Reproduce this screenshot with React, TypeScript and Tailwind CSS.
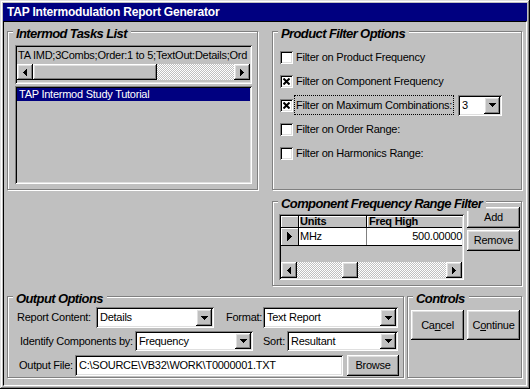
import type { ReactNode } from "react";

// classic 3D edges
const raised =
  "shadow-[inset_-1px_-1px_#000,inset_1px_1px_#fff,inset_-2px_-2px_#808080,inset_2px_2px_#dfdfdf]";
const sunken =
  "shadow-[inset_1px_1px_#808080,inset_-1px_-1px_#fff,inset_2px_2px_#000,inset_-2px_-2px_#dfdfdf]";
const checker =
  "bg-[image:repeating-conic-gradient(#fff_0%_25%,#c0c0c0_0%_50%)] bg-[length:2px_2px]";

function Arrow({ dir }: { dir: "down" | "left" | "right" }) {
  if (dir === "down")
    return (
      <svg width="7" height="4" shapeRendering="crispEdges">
        <polygon points="0,0 7,0 3.5,4" fill="#000" />
      </svg>
    );
  if (dir === "left")
    return (
      <svg width="4" height="7" shapeRendering="crispEdges">
        <polygon points="4,0 4,7 0,3.5" fill="#000" />
      </svg>
    );
  return (
    <svg width="4" height="7" shapeRendering="crispEdges">
      <polygon points="0,0 0,7 4,3.5" fill="#000" />
    </svg>
  );
}

function Group({
  label,
  className,
  children,
}: {
  label: string;
  className?: string;
  children?: ReactNode;
}) {
  return (
    <div
      className={`relative border border-[#808080] shadow-[inset_1px_1px_#fff,1px_1px_#fff] ${className ?? ""}`}
    >
      <span className="absolute left-[5px] -top-[6px] bg-[#c0c0c0] pl-[3px] pr-[4px] text-[13px] leading-[15px] font-bold italic tracking-[-0.6px] whitespace-nowrap">
        {label}
      </span>
      {children}
    </div>
  );
}

function Button({ children, className }: { children: ReactNode; className?: string }) {
  return (
    <div
      className={`flex items-center justify-center bg-[#c0c0c0] ${raised} ${className ?? ""}`}
    >
      {children}
    </div>
  );
}

function Combo({ value, className }: { value: string; className?: string }) {
  return (
    <div className={`flex items-stretch bg-white p-[2px] ${sunken} ${className ?? ""}`}>
      <span className="flex-1 flex items-center pl-[2px] whitespace-nowrap overflow-hidden">
        {value}
      </span>
      <span className={`w-[16px] flex items-center justify-center bg-[#c0c0c0] ${raised}`}>
        <Arrow dir="down" />
      </span>
    </div>
  );
}

function Check({ checked }: { checked?: boolean }) {
  return (
    <span
      className={`w-[13px] h-[13px] shrink-0 flex items-center justify-center bg-white ${sunken}`}
    >
      {checked && (
        <svg width="7" height="7">
          <path d="M0.5 0.5 L6.5 6.5 M6.5 0.5 L0.5 6.5" stroke="#000" strokeWidth="2" />
        </svg>
      )}
    </span>
  );
}

function HScroll({ before, thumb }: { before: number; thumb: number }) {
  return (
    <div className="flex h-[16px]">
      <Button className="w-[16px] h-[16px] shrink-0">
        <Arrow dir="left" />
      </Button>
      <div className={`flex-1 flex ${checker}`}>
        <div style={{ width: before }} />
        <div className={`h-full bg-[#c0c0c0] ${raised}`} style={{ width: thumb }} />
      </div>
      <Button className="w-[16px] h-[16px] shrink-0">
        <Arrow dir="right" />
      </Button>
    </div>
  );
}

const filters = [
  { label: "Filter on Product Frequency", checked: false },
  { label: "Filter on Component Frequency", checked: true },
  { label: "Filter on Maximum Combinations:", checked: true, focus: true },
  { label: "Filter on Order Range:", checked: false },
  { label: "Filter on Harmonics Range:", checked: false },
];

export default function App() {
  return (
    <div
      className={`w-[530px] h-[389px] p-[3px] flex flex-col bg-[#c0c0c0] text-black font-['Liberation_Sans',Arial,sans-serif] text-[11px] tracking-[-0.25px] shadow-[inset_-1px_-1px_#000,inset_1px_1px_#dfdfdf,inset_-2px_-2px_#808080,inset_2px_2px_#fff]`}
    >
      <div className="h-[18px] shrink-0 bg-[#000080] text-white font-bold text-[12px] leading-[18px] tracking-[-0.2px] pl-[4px]">
        TAP Intermodulation Report Generator
      </div>

      <div className="flex-1 flex flex-col border border-l-black border-t-black border-r-white border-b-white pl-[3px] pt-[9px]">
        <div className="flex items-start">
          {/* left: task list */}
          <Group label="Intermod Tasks List" className="w-[251px] h-[159px] pl-[7px] pt-[13px]">
            <div className={`w-[237px] h-[39px] p-[2px] flex flex-col ${sunken}`}>
              <div className="h-[17px] flex items-center pl-[1px] whitespace-nowrap overflow-hidden">
                TA IMD;3Combs;Order:1 to 5;TextOut:Details;Ord
              </div>
              <HScroll before={0} thumb={124} />
            </div>
            <div className={`w-[237px] h-[98px] mt-[2px] p-[2px] ${sunken}`}>
              <div className="h-[13px] bg-[#000080] text-white flex items-center pl-[2px] whitespace-nowrap">
                TAP Intermod Study Tutorial
              </div>
            </div>
          </Group>

          <div className="ml-[14px] flex flex-col">
            <Group label="Product Filter Options" className="w-[250px] h-[159px] pl-[7px] pt-[13px]">
              {filters.map(f => (
                <div key={f.label} className="h-[24px] flex items-center">
                  <Check checked={f.checked} />
                  <span
                    className={`ml-[1px] px-[1px] py-[1px] border whitespace-nowrap ${
                      f.focus ? "border-dotted border-black" : "border-transparent"
                    }`}
                  >
                    {f.label}
                  </span>
                  {f.focus && <Combo value="3" className="ml-[4px] w-[44px] h-[21px]" />}
                </div>
              ))}
            </Group>

            <Group
              label="Component Frequency Range Filter"
              className="mt-[11px] w-[250px] h-[85px] pl-[6px] pt-[5px] flex items-start"
            >
              <div className={`mt-[7px] w-[185px] h-[66px] p-[2px] flex flex-col bg-[#c0c0c0] ${sunken}`}>
                <div className="h-[12px] flex border-b border-black font-bold leading-[11px]">
                  <div className="w-[18px] border-r border-black shadow-[inset_1px_1px_#fff]" />
                  <div className="w-[68px] border-r border-black pl-[1px] shadow-[inset_1px_1px_#fff]">Units</div>
                  <div className="flex-1 pl-[2px] shadow-[inset_1px_1px_#fff]">Freq High</div>
                </div>
                <div className="h-[18px] flex border-b border-black">
                  <div className="w-[18px] border-r border-black flex items-center justify-center shadow-[inset_1px_1px_#fff]">
                    <svg width="5" height="9" shapeRendering="crispEdges">
                      <polygon points="0,0 0,9 5,4.5" fill="#000" />
                    </svg>
                  </div>
                  <div className="w-[68px] border-r border-[#808080] bg-white pl-[1px] flex items-center">MHz</div>
                  <div className="flex-1 bg-white flex items-center justify-end">500.00000</div>
                </div>
                <div className="flex-1" />
                <HScroll before={45} thumb={16} />
              </div>
              <div className="ml-[3px] flex flex-col gap-[2px]">
                <Button className="w-[53px] h-[21px]">Add</Button>
                <Button className="w-[53px] h-[21px]">Remove</Button>
              </div>
            </Group>
          </div>
        </div>

        <div className="mt-[10px] flex items-start">
          <Group label="Output Options" className="w-[397px] h-[82px] pt-[10px]">
            <div className="h-[21px] flex items-center pl-[9px]">
              <span className="w-[79px]">Report Content:</span>
              <Combo value="Details" className="w-[118px] h-[21px]" />
              <span className="ml-[12px] w-[37px]">Format:</span>
              <Combo value="Text Report" className="w-[135px] h-[21px]" />
            </div>
            <div className="h-[20px] mt-[3px] flex items-center pl-[12px]">
              <span className="w-[115px]">Identify Components by:</span>
              <Combo value="Frequency" className="w-[118px] h-[20px]" />
              <span className="ml-[10px] w-[24px]">Sort:</span>
              <Combo value="Resultant" className="w-[111px] h-[20px]" />
            </div>
            <div className="h-[21px] mt-[4px] flex items-center pl-[11px]">
              <span className="w-[56px]">Output File:</span>
              <div className={`w-[268px] h-[21px] bg-white p-[2px] pl-[4px] flex items-center whitespace-nowrap overflow-hidden ${sunken}`}>
                C:\SOURCE\VB32\WORK\T0000001.TXT
              </div>
              <Button className="ml-[4px] w-[52px] h-[21px]">Browse</Button>
            </div>
          </Group>

          <Group label="Controls" className="ml-[3px] w-[115px] h-[82px] pl-[3px] pt-[13px] flex gap-[3px]">
            <Button className="w-[53px] h-[30px]">
              Ca<span className="underline">n</span>cel
            </Button>
            <Button className="w-[53px] h-[30px]">
              C<span className="underline">o</span>ntinue
            </Button>
          </Group>
        </div>
      </div>
    </div>
  );
}
